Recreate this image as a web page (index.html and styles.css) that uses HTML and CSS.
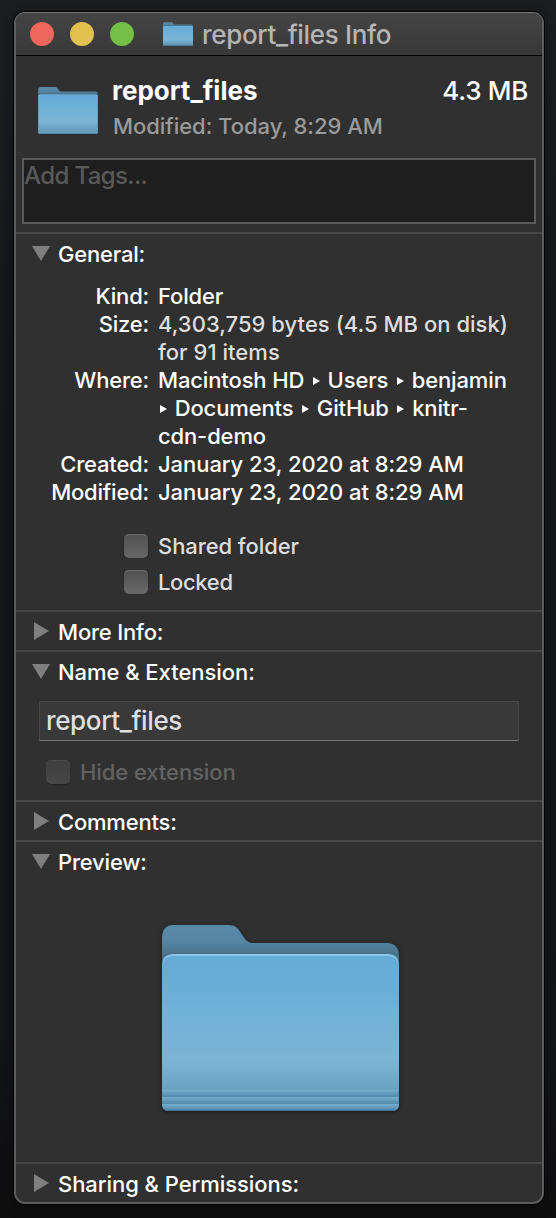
FILE: index.html
```html
<!DOCTYPE html>
<html lang="en">
<head>
<meta charset="utf-8">
<title>report_files Info</title>
<link rel="stylesheet" href="styles.css">
</head>
<body>
<svg class="defs" width="0" height="0" aria-hidden="true">
  <defs>
    <linearGradient id="front" x1="0" y1="0" x2="0" y2="1">
      <stop offset="0" stop-color="#65abd8"/>
      <stop offset=".15" stop-color="#67add7"/>
      <stop offset=".45" stop-color="#73b3d7"/>
      <stop offset=".68" stop-color="#7bb4d6"/>
      <stop offset=".86" stop-color="#6aa3c4"/>
      <stop offset="1" stop-color="#5b94b8"/>
    </linearGradient>
    <linearGradient id="back" gradientUnits="userSpaceOnUse" x1="0" y1="0" x2="0" y2="38">
      <stop offset="0" stop-color="#588baa"/>
      <stop offset=".45" stop-color="#5585a2"/>
      <stop offset=".78" stop-color="#487188"/>
      <stop offset="1" stop-color="#4b7892"/>
    </linearGradient>
    <linearGradient id="fold" x1="0" y1="0" x2="0" y2="1">
      <stop offset="0" stop-color="#78afcc"/>
      <stop offset=".2" stop-color="#6ba4c4"/>
      <stop offset="1" stop-color="#538bb0"/>
    </linearGradient>
    <linearGradient id="shine" gradientUnits="userSpaceOnUse" x1="0" y1="29" x2="0" y2="41">
      <stop offset="0" stop-color="#8fc5e4"/>
      <stop offset=".3" stop-color="#86bfe1"/>
      <stop offset="1" stop-color="#86bfe1" stop-opacity="0"/>
    </linearGradient>
    <clipPath id="frontClip"><path d="M0 41Q0 29 12 29H225Q237 29 237 41V179Q237 186 230 186H7Q0 186 0 179Z"/></clipPath>
    <symbol id="folder" viewBox="0 0 237 186">
      <path fill="url(#back)" d="M0 13Q0 0 12 0H67C73 0 76 3 79 8C83 14 85 18 91 18H226Q237 19 237 31V60H0Z"/>
      <g clip-path="url(#frontClip)">
        <rect y="29" width="237" height="157" fill="url(#front)"/>
        <path d="M0 42Q0 30 12 30H225Q237 30 237 42" fill="none" stroke="url(#shine)" stroke-width="2"/>
        <rect y="165" width="237" height="7" fill="url(#fold)"/>
        <rect y="172" width="237" height="7" fill="url(#fold)"/>
        <rect y="179" width="237" height="7" fill="url(#fold)"/>
        <rect y="184.700" width="237" height="1.300" fill="#3f6f91"/>
      </g>
    </symbol>
  </defs>
</svg>

<main class="window">
  <header class="titlebar">
    <div class="lights"><i class="light close"></i><i class="light minimize"></i><i class="light zoom"></i></div>
    <svg class="title-icon"><use href="#folder"/></svg>
    <h1 class="title">report_files Info</h1>
  </header>

  <section class="summary">
    <svg class="summary-icon"><use href="#folder"/></svg>
    <div class="summary-text">
      <div class="summary-top"><strong class="name">report_files</strong><span class="size">4.3 MB</span></div>
      <div class="modified">Modified: Today, 8:29 AM</div>
    </div>
  </section>
  <div class="tags">Add Tags...</div>

  <section class="section general">
    <h2 class="head"><svg class="arrow" viewBox="0 0 18 18"><path d="M0 2H18L9 17Z"/></svg><span>General:</span></h2>
    <dl class="details">
      <dt>Kind:</dt><dd>Folder</dd>
      <dt>Size:</dt><dd class="soft">4,303,759 bytes (4.5 MB on disk)<br>for 91 items</dd>
      <dt>Where:</dt><dd>Macintosh HD <svg class="sep" viewBox="0 0 7 8"><path d="M0 0L7 4L0 8Z"/></svg> Users <svg class="sep" viewBox="0 0 7 8"><path d="M0 0L7 4L0 8Z"/></svg> benjamin<br><svg class="sep first" viewBox="0 0 7 8"><path d="M0 0L7 4L0 8Z"/></svg> Documents <svg class="sep" viewBox="0 0 7 8"><path d="M0 0L7 4L0 8Z"/></svg> GitHub <svg class="sep" viewBox="0 0 7 8"><path d="M0 0L7 4L0 8Z"/></svg> knitr-<br>cdn-demo</dd>
      <dt>Created:</dt><dd class="date">January 23, 2020 at 8:29 AM</dd>
      <dt>Modified:</dt><dd class="date">January 23, 2020 at 8:29 AM</dd>
    </dl>
    <div class="checks">
      <label class="check"><i class="box"></i><span>Shared folder</span></label>
      <label class="check"><i class="box"></i><span class="tight">Locked</span></label>
    </div>
  </section>

  <section class="section">
    <h2 class="head"><svg class="arrow" viewBox="0 0 18 18"><path d="M2 0L17 9L2 18Z"/></svg><span>More Info:</span></h2>
  </section>

  <section class="section naming">
    <h2 class="head"><svg class="arrow" viewBox="0 0 18 18"><path d="M0 2H18L9 17Z"/></svg><span class="wide">Name &amp; Extension:</span></h2>
    <div class="field">report_files</div>
    <label class="check disabled"><i class="box"></i><span>Hide extension</span></label>
  </section>

  <section class="section">
    <h2 class="head"><svg class="arrow" viewBox="0 0 18 18"><path d="M2 0L17 9L2 18Z"/></svg><span>Comments:</span></h2>
  </section>

  <section class="section preview">
    <h2 class="head"><svg class="arrow" viewBox="0 0 18 18"><path d="M0 2H18L9 17Z"/></svg><span>Preview:</span></h2>
    <svg class="preview-icon"><use href="#folder"/></svg>
  </section>

  <section class="section">
    <h2 class="head"><svg class="arrow" viewBox="0 0 18 18"><path d="M2 0L17 9L2 18Z"/></svg><span class="wide">Sharing &amp; Permissions:</span></h2>
  </section>
</main>
</body>
</html>
```

FILE: styles.css
```css
* { box-sizing: border-box; }
body {
  margin: 0;
  height: 1218px;
  padding: 12px 12px 14px 14px;
  overflow: hidden;
  background: linear-gradient(#1c1e20 0, #15171a 30%, #141519 85%, #0e0e0f 100%);
  font: 500 22px/28px Inter, "Liberation Sans", sans-serif;
  letter-spacing: -0.2px;
  color: #fff;
}
.defs { position: absolute; }
h1, h2, dl, dd { margin: 0; font: inherit; }
svg { display: block; flex: none; }

.window {
  display: flex;
  flex-direction: column;
  width: 530px;
  height: 1192px;
  border: 2px solid #5c5c5c;
  border-top: 1px solid #777;
  border-radius: 11px;
  background: #303030;
  box-shadow: 0 0 0 1px #000, 0 0 16px rgba(0, 0, 0, .4);
}

.titlebar {
  display: flex;
  align-items: center;
  height: 43px;
  padding: 0 0 0 14px;
  border-bottom: 1px solid #000;
  border-radius: 9px 9px 0 0;
  background: linear-gradient(#444, #383838);
}
.lights { display: flex; gap: 16px; margin-right: 29px; }
.light { width: 24px; height: 24px; border-radius: 50%; }
.close { background: #ee665c; }
.minimize { background: #e1c04d; }
.zoom { background: #73bf48; }
.title-icon { width: 30px; height: 24px; margin-right: 9px; }
.title { padding-top: 2px; color: #b5b5b5; font-size: 26px; font-weight: 450; letter-spacing: -0.33px; }

.summary { display: flex; padding: 16px 14px 0 22px; height: 102px; }
.summary-icon { width: 60px; height: 47px; margin: 15px 14px 0 0; }
.summary-text { flex: 1; }
.summary-top { display: flex; justify-content: space-between; line-height: 38px; font-size: 26px; }
.name { font-weight: 750; letter-spacing: 0; }
.size { letter-spacing: -0.3px; }
.modified { margin: 1px 0 0 1px; color: #9b9b9b; font-weight: 450; line-height: 30px; letter-spacing: -0.04px; }
.tags {
  height: 66px;
  margin: 0 6px 8px;
  border: 2px solid #5a5a5a;
  background: #1e1e1e;
  color: #595959;
  font-size: 24px;
  font-weight: 450;
  line-height: 32px;
  letter-spacing: -0.62px;
}

.section { border-top: 2px solid #474747; }
.head { display: flex; align-items: center; height: 38px; padding: 2px 0 0 16px; }
.arrow { width: 18px; height: 18px; margin: -2px 8px 0 0; fill: #7f7f7f; }
.wide { letter-spacing: -0.05px; }
.general { height: 378px; }
.details {
  display: grid;
  grid-template-columns: 133px 1fr;
  column-gap: 9px;
  margin-top: 10px;
}
.details dt { text-align: right; }
.details dd { letter-spacing: -0.14px; }
.details .soft { color: #dedede; letter-spacing: 0.03px; }
.details .date { letter-spacing: -0.06px; }
.sep { display: inline-block; width: 7px; height: 8px; margin: 0 2px 0 3px; vertical-align: 3px; fill: #fff; }
.first { margin-left: 2px; }
.checks { display: flex; flex-direction: column; gap: 8px; margin: 26px 0 0 108px; }
.check { display: flex; align-items: center; gap: 10px; height: 28px; color: #dedede; font-weight: 450; letter-spacing: -0.08px; }
.tight { letter-spacing: -0.35px; }
.box {
  width: 24px;
  height: 24px;
  border-radius: 5px;
  background: linear-gradient(#505050, #686868);
  box-shadow: 0 0 1px #111, inset 0 1px 0 #6b6b6b;
}
.naming { height: 150px; }
.field {
  height: 40px;
  margin: 11px 23px 0;
  padding-left: 6px;
  border: 1px solid #474747;
  border-bottom-color: #777;
  background: #393939;
  color: #dfdfdf;
  font-size: 26px;
  font-weight: 450;
  line-height: 38px;
  letter-spacing: -0.36px;
}
.disabled { margin: 17px 0 0 30px; color: #626262; }
.disabled .box { background: linear-gradient(#3e3e3e, #484848); box-shadow: 0 1px 1px #252525, inset 0 1px 0 #494949; }
.preview { height: 322px; }
.preview-icon {
  width: 237px;
  height: 186px;
  margin: 45px 0 0 146px;
  overflow: visible;
  filter: drop-shadow(0 1px 2px rgba(0, 0, 0, .5));
}
```
